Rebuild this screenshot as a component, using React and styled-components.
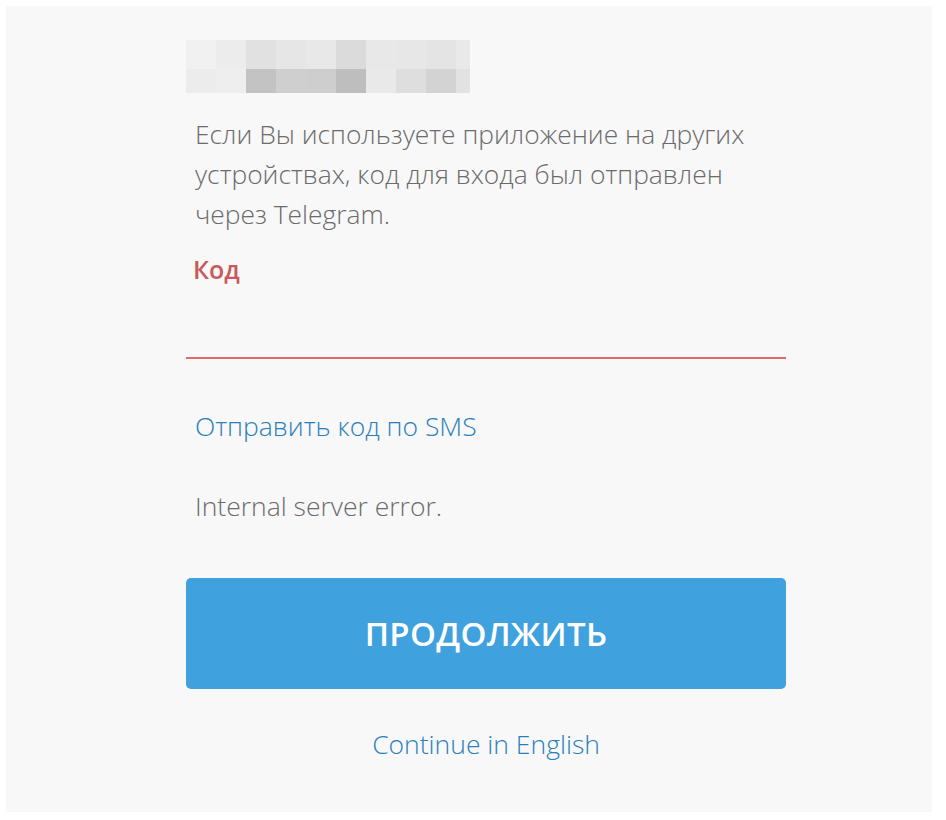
import React from 'react';
import styled, { createGlobalStyle } from 'styled-components';

const GlobalStyle = createGlobalStyle`
  html, body {
    margin: 0;
    padding: 0;
    background: #ffffff;
  }
  body {
    font-family: "Open Sans", "Noto Sans", "Liberation Sans", sans-serif;
  }
`;

const Page = styled.div`
  margin: 6px 14px 8px 6px;
  height: 806px;
  background-color: #f8f8f8;
  box-sizing: border-box;
  padding-top: 34px;
`;

const Column = styled.div`
  width: 600px;
  margin-left: 180px;
  display: flex;
  flex-direction: column;
`;

const Pixelated = styled.div`
  display: grid;
  grid-template-columns: repeat(9, 30px) 14px;
  grid-template-rows: 29px 24px;
  width: 284px;
`;

const Tile = styled.div`
  background-color: ${({ $shade }) => $shade};
`;

const Hint = styled.p`
  margin: 21px 0 0 9px;
  max-width: 585px;
  font-size: 26.4px;
  line-height: 40px;
  font-weight: 300;
  color: #6b6b6b;
`;

const Label = styled.label`
  margin: 20px 0 0 7px;
  font-size: 25px;
  line-height: 30px;
  font-weight: 600;
  color: #c9595b;
`;

const CodeInput = styled.input`
  margin-top: 0;
  height: 73px;
  border: none;
  border-bottom: 2px solid #e36a6a;
  background: transparent;
  outline: none;
  font-family: inherit;
  font-size: 26px;
  color: #555;
  padding: 0 9px;
`;

const TextLink = styled.a`
  align-self: ${({ $center }) => ($center ? 'center' : 'flex-start')};
  margin: ${({ $gap }) => $gap}px 0 0 ${({ $center }) => ($center ? 0 : 9)}px;
  font-size: 26.5px;
  line-height: 30px;
  font-weight: 300;
  color: #2a80ba;
  text-decoration: none;
  cursor: pointer;
`;

const ErrorText = styled.div`
  margin: 50px 0 0 9px;
  font-size: 26.5px;
  line-height: 30px;
  font-weight: 300;
  color: #6b6b6b;
`;

const SubmitButton = styled.button`
  margin-top: 57px;
  height: 111px;
  border: none;
  border-radius: 5px;
  background-color: #3fa1dd;
  color: #ffffff;
  font-family: inherit;
  font-size: 33px;
  font-weight: 600;
  letter-spacing: 0.3px;
  cursor: pointer;
`;

const tiles = [
  '#f1f1f1', '#ececec', '#e1e1e1', '#e6e6e6', '#e8e8e8', '#dbdbdb', '#e8e8e8', '#e7e7e7', '#e4e4e4', '#e9e9e9',
  '#ececec', '#eeeeee', '#c3c3c3', '#cfcfcf', '#cecece', '#bebebe', '#e9e9e9', '#dedede', '#d3d3d3', '#e2e2e2',
];

function App() {
  const [code, setCode] = React.useState('');

  return (
    <>
      <GlobalStyle />
      <Page>
        <Column>
          <Pixelated>
            {tiles.map((shade, i) => (
              <Tile key={i} $shade={shade} />
            ))}
          </Pixelated>
          <Hint>
            Если Вы используете приложение на других устройствах, код для входа был отправлен через Telegram.
          </Hint>
          <Label htmlFor="code">Код</Label>
          <CodeInput id="code" value={code} onChange={(e) => setCode(e.target.value)} />
          <TextLink $gap={52}>Отправить код по SMS</TextLink>
          <ErrorText>Internal server error.</ErrorText>
          <SubmitButton>ПРОДОЛЖИТЬ</SubmitButton>
          <TextLink $center $gap={40}>Continue in English</TextLink>
        </Column>
      </Page>
    </>
  );
}

export default App;
